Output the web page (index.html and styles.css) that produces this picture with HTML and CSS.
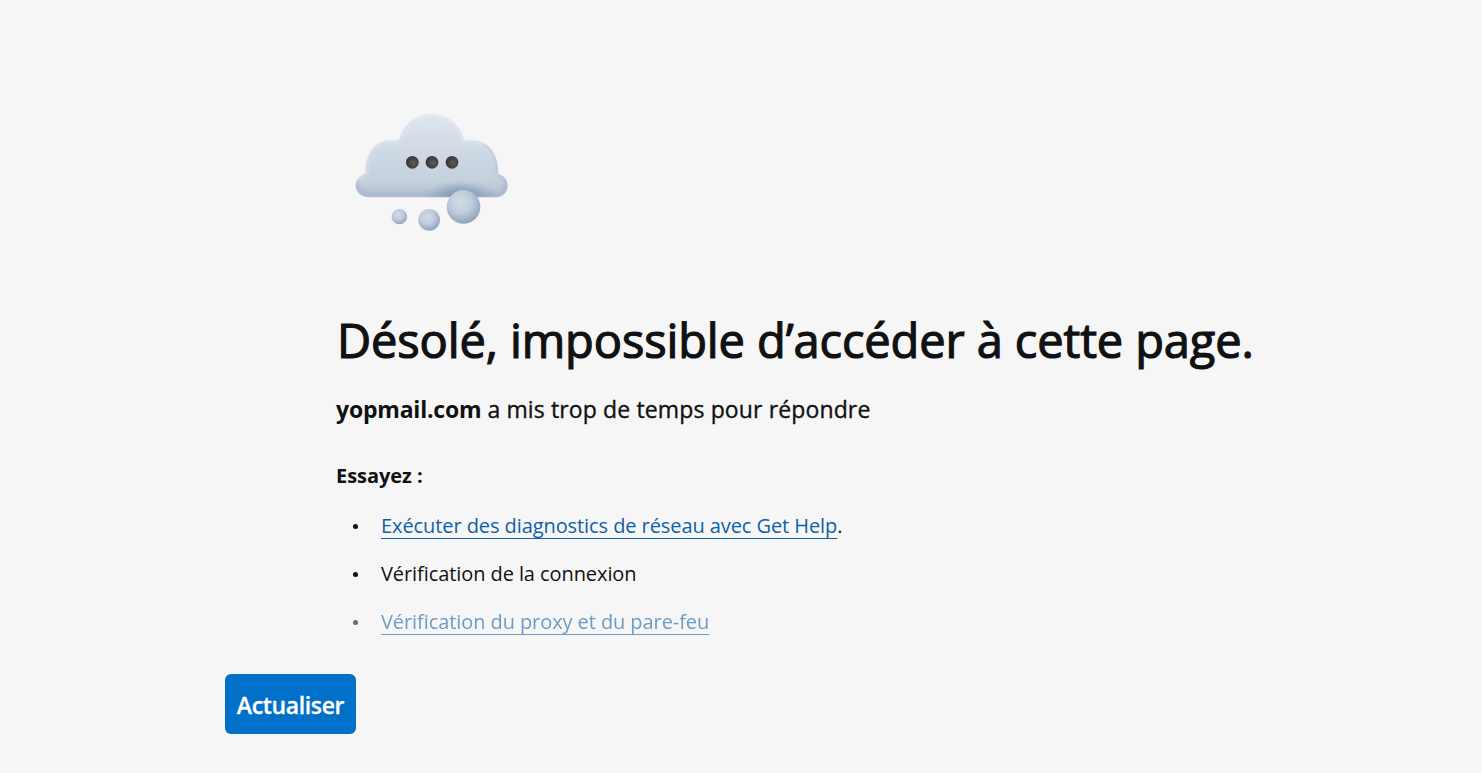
FILE: index.html
```html
<!DOCTYPE html>
<html lang="fr">
<head>
<meta charset="utf-8">
<title>yopmail.com</title>
<link rel="stylesheet" href="styles.css">
</head>
<body>
<main class="error-page">
  <svg class="cloud" viewBox="0 0 555 435" aria-hidden="true">
    <defs>
      <linearGradient id="body" x1="0" y1="0" x2="0" y2="1">
        <stop offset="0" stop-color="#dfe6ed"/>
        <stop offset=".45" stop-color="#cfd9e4"/>
        <stop offset=".8" stop-color="#c5d0dd"/>
        <stop offset="1" stop-color="#b0bfd1"/>
      </linearGradient>
      <radialGradient id="ball" cx=".42" cy=".36" r=".66">
        <stop offset="0" stop-color="#d2dce7"/>
        <stop offset=".5" stop-color="#bfccdb"/>
        <stop offset="1" stop-color="#8fa1ba"/>
      </radialGradient>
      <radialGradient id="shade">
        <stop offset="0" stop-color="#6f88a8" stop-opacity=".95"/>
        <stop offset=".55" stop-color="#8198b5" stop-opacity=".5"/>
        <stop offset="1" stop-color="#9aacc3" stop-opacity="0"/>
      </radialGradient>
      <radialGradient id="dot" cx=".6" cy=".55" r=".6">
        <stop offset="0" stop-color="#5c5c5a"/>
        <stop offset="1" stop-color="#333332"/>
      </radialGradient>
      <filter id="soft" x="-10%" y="-10%" width="120%" height="120%"><feGaussianBlur stdDeviation="6"/></filter>
      <path id="outline" d="M88 292C64 292 47 277 47 256C47 240 57 228 77 220C74 160 107 119 155 121C168 121 174 122 178 115C190 74 225 42 273 42C322 42 361 74 371 115C374 123 382 122 396 121C441 121 475 155 475 222C492 227 503 239 503 257C503 278 487 292 464 292Z"/>
      <clipPath id="clip"><use href="#outline"/></clipPath>
    </defs>
    <use href="#outline" fill="url(#body)"/>
    <g clip-path="url(#clip)">
      <use href="#outline" fill="none" stroke="#eef2f6" stroke-opacity=".65" stroke-width="7" filter="url(#soft)"/>
      <path d="M47 245C51 277 66 287 84 287H470C491 287 499 272 503 243" fill="none" stroke="#91a3bb" stroke-opacity=".6" stroke-width="14" filter="url(#soft)"/>
      <path d="M435 128C463 142 475 174 475 222C491 228 501 240 502 257" fill="none" stroke="#98aac0" stroke-opacity=".65" stroke-width="10" filter="url(#soft)"/>
      <ellipse cx="362" cy="288" rx="110" ry="48" fill="url(#shade)"/>
    </g>
    <g fill="url(#dot)">
      <circle cx="217" cy="187" r="19"/>
      <circle cx="276" cy="187" r="19"/>
      <circle cx="336" cy="187" r="19"/>
    </g>
    <g fill="url(#ball)">
      <circle cx="178" cy="350" r="23"/>
      <circle cx="267.500" cy="359.500" r="32.500"/>
      <circle cx="370.500" cy="320.500" r="50.500"/>
    </g>
  </svg>
  <h1 class="title">Désolé, impossible d’accéder à cette page.</h1>
  <p class="summary"><strong class="host">yopmail.com</strong> <span class="reason">a mis trop de temps pour répondre</span></p>
  <p class="try">Essayez :</p>
  <ul class="tips">
    <li class="tip"><a class="link link-help" href="#">Exécuter des diagnostics de réseau avec Get Help</a>.</li>
    <li class="tip"><span class="check">Vérification de la connexion</span></li>
    <li class="tip tip-faded"><a class="link link-proxy" href="#">Vérification du proxy et du pare-feu</a></li>
  </ul>
</main>
<footer class="actions"><button class="refresh" type="button">Actualiser</button></footer>
</body>
</html>
```
FILE: styles.css
```css
* { box-sizing: border-box; }
body {
  margin: 0;
  height: 773px;
  overflow: hidden;
  background: #f6f6f6;
  color: #101112;
  font-family: "Segoe UI", "Open Sans", "Noto Sans", sans-serif;
}
.error-page { padding: 100px 0 0 336px; white-space: nowrap; }
.cloud { display: block; width: 185px; height: 145px; margin-left: 4px; }
.title { margin: 63px 0 0; padding-left: 1px; font-size: 47px; line-height: 64px; font-weight: 400; letter-spacing: -.11px; -webkit-text-stroke: 1.2px #101112; }
.summary { margin: 21px 0 0; font-size: 23px; line-height: 32px; font-weight: 400; }
.host { font-weight: 700; letter-spacing: -.2px; }
.reason { letter-spacing: .13px; -webkit-text-stroke: .35px #101112; }
.try { margin: 37px 0 0; font-size: 20px; line-height: 28px; font-weight: 700; letter-spacing: -.05px; }
.tips { margin: 12px 0 0; padding: 0; list-style: none; font-size: 20px; line-height: 48px; letter-spacing: -.08px; }
.tip { display: flex; height: 48px; }
.tip::before {
  content: "";
  width: 5px;
  height: 5px;
  margin: 22px 23px 0 17px;
  border-radius: 50%;
  background: #101112;
}
.link { color: #0f5fa8; text-decoration: underline #0f5fa8; text-decoration-thickness: 1px; text-underline-offset: 5px; text-decoration-skip-ink: none; }
.tip-faded { opacity: .6; }
.actions { padding: 28px 0 0 225px; }
.refresh {
  display: block;
  width: 131px;
  height: 60px;
  padding: 2px 0 0;
  border: 0;
  border-radius: 6px;
  background: #0070c9;
  color: #fff;
  font: 600 23px/32px "Segoe UI", "Open Sans", "Noto Sans", sans-serif;
  letter-spacing: -.35px;
  -webkit-text-stroke: .3px #fff;
}
```
